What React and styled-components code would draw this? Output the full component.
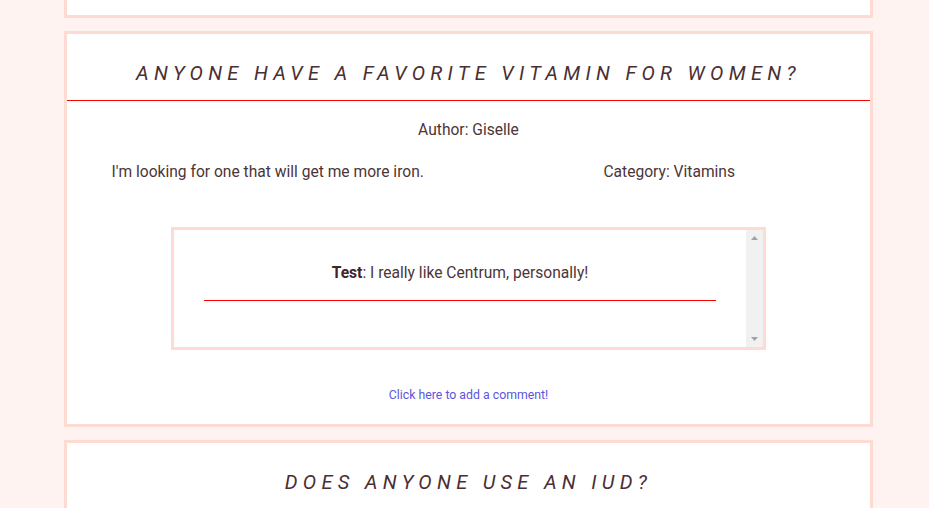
import styled, { createGlobalStyle } from "styled-components";

const GlobalStyle = createGlobalStyle`
  html, body {
    margin: 0;
    padding: 0;
    background: #fff3f1;
    overflow: hidden;
  }

  body {
    font-family: "Roboto", "Liberation Sans", sans-serif;
    color: #4d3538;
  }
`;

const posts = [
  {
    title: "Anyone have a favorite vitamin for women?",
    author: "Giselle",
    body: "I'm looking for one that will get me more iron.",
    category: "Vitamins",
    comments: [{ user: "Test", text: "I really like Centrum, personally!" }],
  },
];

// headless capture hides native scrollbars, so the rail is drawn by hand
const ScrollBar = () => (
  <Rail>
    <Arrow viewBox="0 0 7 4">
      <path d="M0 4 L3.5 0 L7 4 Z" />
    </Arrow>
    <Arrow viewBox="0 0 7 4">
      <path d="M0 0 L3.5 4 L7 0 Z" />
    </Arrow>
  </Rail>
);

const App = () => {
  return (
    <>
      <GlobalStyle />
      <Feed>
        <CardTail />
        {posts.map((post) => (
          <Card key={post.title}>
            <TitleBar>
              <Title>{post.title}</Title>
            </TitleBar>
            <Author>Author: {post.author}</Author>
            <Details>
              <Detail>{post.body}</Detail>
              <Detail>Category: {post.category}</Detail>
            </Details>
            <CommentBox>
              <CommentList>
                {post.comments.map((c) => (
                  <Comment key={c.user}>
                    <CommentText>
                      <b>{c.user}</b>: {c.text}
                    </CommentText>
                    <CommentRule />
                  </Comment>
                ))}
              </CommentList>
              <ScrollBar />
            </CommentBox>
            <AddLink href="#">Click here to add a comment!</AddLink>
          </Card>
        ))}
        <Card>
          <TitleBar $plain>
            <Title>Does anyone use an IUD?</Title>
          </TitleBar>
        </Card>
      </Feed>
    </>
  );
};

const Feed = styled.main`
  width: 809px;
  margin-left: 64px;
  display: flex;
  flex-direction: column;
  gap: 13px;
`;

const CardTail = styled.div`
  height: 15px;
  background: #fff;
  border: 3px solid #fddbd2;
  border-top: none;
`;

const Card = styled.section`
  background: #fff;
  border: 3px solid #fddbd2;
  padding-bottom: 21px;
  display: flex;
  flex-direction: column;
  align-items: center;
`;

const TitleBar = styled.header`
  align-self: stretch;
  padding: 27px 0 15px;
  border-bottom: 1px solid ${(p) => (p.$plain ? "transparent" : "#ff0000")};
  text-align: center;
`;

const Title = styled.h2`
  margin: 0;
  font-size: 20px;
  line-height: 24px;
  font-weight: 400;
  font-style: italic;
  text-transform: uppercase;
  letter-spacing: 5.3px;
  white-space: nowrap;
  color: #4a2f33;
`;

const Author = styled.p`
  margin: 19px 0 0;
  font-size: 15.6px;
  line-height: 20px;
`;

const Details = styled.div`
  align-self: stretch;
  display: grid;
  grid-template-columns: 1fr 1fr;
  margin-top: 22px;
`;

const Detail = styled.p`
  margin: 0;
  text-align: center;
  font-size: 15.6px;
  line-height: 20px;
`;

const CommentBox = styled.div`
  margin-top: 45px;
  width: 595px;
  height: 123px;
  box-sizing: border-box;
  border: 3px solid #fddbd2;
  display: flex;
`;

const CommentList = styled.div`
  flex: 1;
  overflow: hidden;
`;

const Rail = styled.div`
  width: 17px;
  background: #f1f1f1;
  display: flex;
  flex-direction: column;
  justify-content: space-between;
  align-items: center;
  padding: 6px 0;
`;

const Arrow = styled.svg`
  width: 7px;
  height: 4px;
  fill: #a3a3a3;
`;

const Comment = styled.div`
  padding-top: 33px;
`;

const CommentText = styled.p`
  margin: 0;
  text-align: center;
  font-size: 15.6px;
  line-height: 20px;

  b {
    font-weight: 700;
    color: #3f2529;
  }
`;

const CommentRule = styled.div`
  margin: 17px 30px 0;
  height: 1px;
  background: #ff0000;
`;

const AddLink = styled.a`
  margin-top: 37px;
  font-size: 12.3px;
  line-height: 16px;
  color: #5b55dc;
  text-decoration: none;
`;

export default App;
